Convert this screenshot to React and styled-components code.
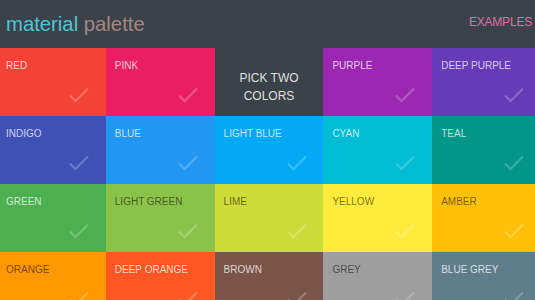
import React from "react";
import styled, { createGlobalStyle } from "styled-components";

const Global = createGlobalStyle`
  html, body { margin: 0; padding: 0; overflow: hidden; background: #3c4249; }
  body { font-family: "Liberation Sans", Arial, sans-serif; }
`;

const Page = styled.div`
  width: 535px;
  display: flex;
  flex-direction: column;
`;

const Header = styled.header`
  height: 48px;
  background: #3c4249;
  display: flex;
  align-items: center;
  justify-content: space-between;
  padding: 0 3px 0 6px;
  box-sizing: border-box;
`;

const Title = styled.h1`
  margin: 0;
  font-size: 20.3px;
  font-weight: 400;
  line-height: 23px;
  padding-top: 1px;
`;

const Word = styled.span`
  color: ${(p) => p.$color};
`;

const Examples = styled.a`
  font-size: 12px;
  letter-spacing: -0.2px;
  color: #dc6fab;
  text-decoration: none;
  margin-bottom: 4px;
`;

const Grid = styled.div`
  width: 544px;
  margin-left: -3px;
  display: grid;
  grid-template-columns: repeat(5, 1fr);
  grid-auto-rows: 68px;
`;

const Tile = styled.div`
  position: relative;
  background: ${(p) => p.$bg};
  color: ${(p) => (p.$light ? "rgba(0,0,0,0.55)" : "rgba(255,255,255,0.75)")};
  font-size: 10px;
  line-height: 12px;
  padding: 12px 9px 0;
  box-sizing: border-box;
`;

const PickTile = styled.div`
  background: #3c4249;
  color: rgba(255, 255, 255, 0.85);
  font-size: 12px;
  line-height: 18px;
  display: flex;
  align-items: center;
  justify-content: center;
  text-align: center;
  padding-top: 9px;
  box-sizing: border-box;
`;

const Check = styled.svg`
  position: absolute;
  left: 70px;
  top: 38px;
  width: 24px;
  height: 18px;
`;

const colors = [
  ["RED", "#F44336"],
  ["PINK", "#E91E63"],
  null,
  ["PURPLE", "#9C27B0"],
  ["DEEP PURPLE", "#673AB7"],
  ["INDIGO", "#3F51B5"],
  ["BLUE", "#2196F3"],
  ["LIGHT BLUE", "#03A9F4"],
  ["CYAN", "#00BCD4"],
  ["TEAL", "#009688"],
  ["GREEN", "#4CAF50"],
  ["LIGHT GREEN", "#8BC34A", true],
  ["LIME", "#CDDC39", true],
  ["YELLOW", "#FFEB3B", true],
  ["AMBER", "#FFC107", true],
  ["ORANGE", "#FF9800", true],
  ["DEEP ORANGE", "#FF5722"],
  ["BROWN", "#795548"],
  ["GREY", "#9E9E9E", true],
  ["BLUE GREY", "#607D8B"],
];

const CheckMark = () => (
  <Check viewBox="0 0 24 18">
    <path
      d="M3 9.5 L8.5 15 L21 2.5"
      fill="none"
      stroke="rgba(255,255,255,0.22)"
      strokeWidth="2.4"
    />
  </Check>
);

export default function App() {
  return (
    <>
      <Global />
      <Page>
        <Header>
          <Title>
            <Word $color="#4ec5d4">material</Word>{" "}
            <Word $color="#a1887f">palette</Word>
          </Title>
          <Examples href="#">EXAMPLES</Examples>
        </Header>
        <Grid>
          {colors.map((c) =>
            c ? (
              <Tile key={c[0]} $bg={c[1]} $light={c[2]}>
                {c[0]}
                <CheckMark />
              </Tile>
            ) : (
              <PickTile key="pick">
                PICK TWO
                <br />
                COLORS
              </PickTile>
            )
          )}
        </Grid>
      </Page>
    </>
  );
}
